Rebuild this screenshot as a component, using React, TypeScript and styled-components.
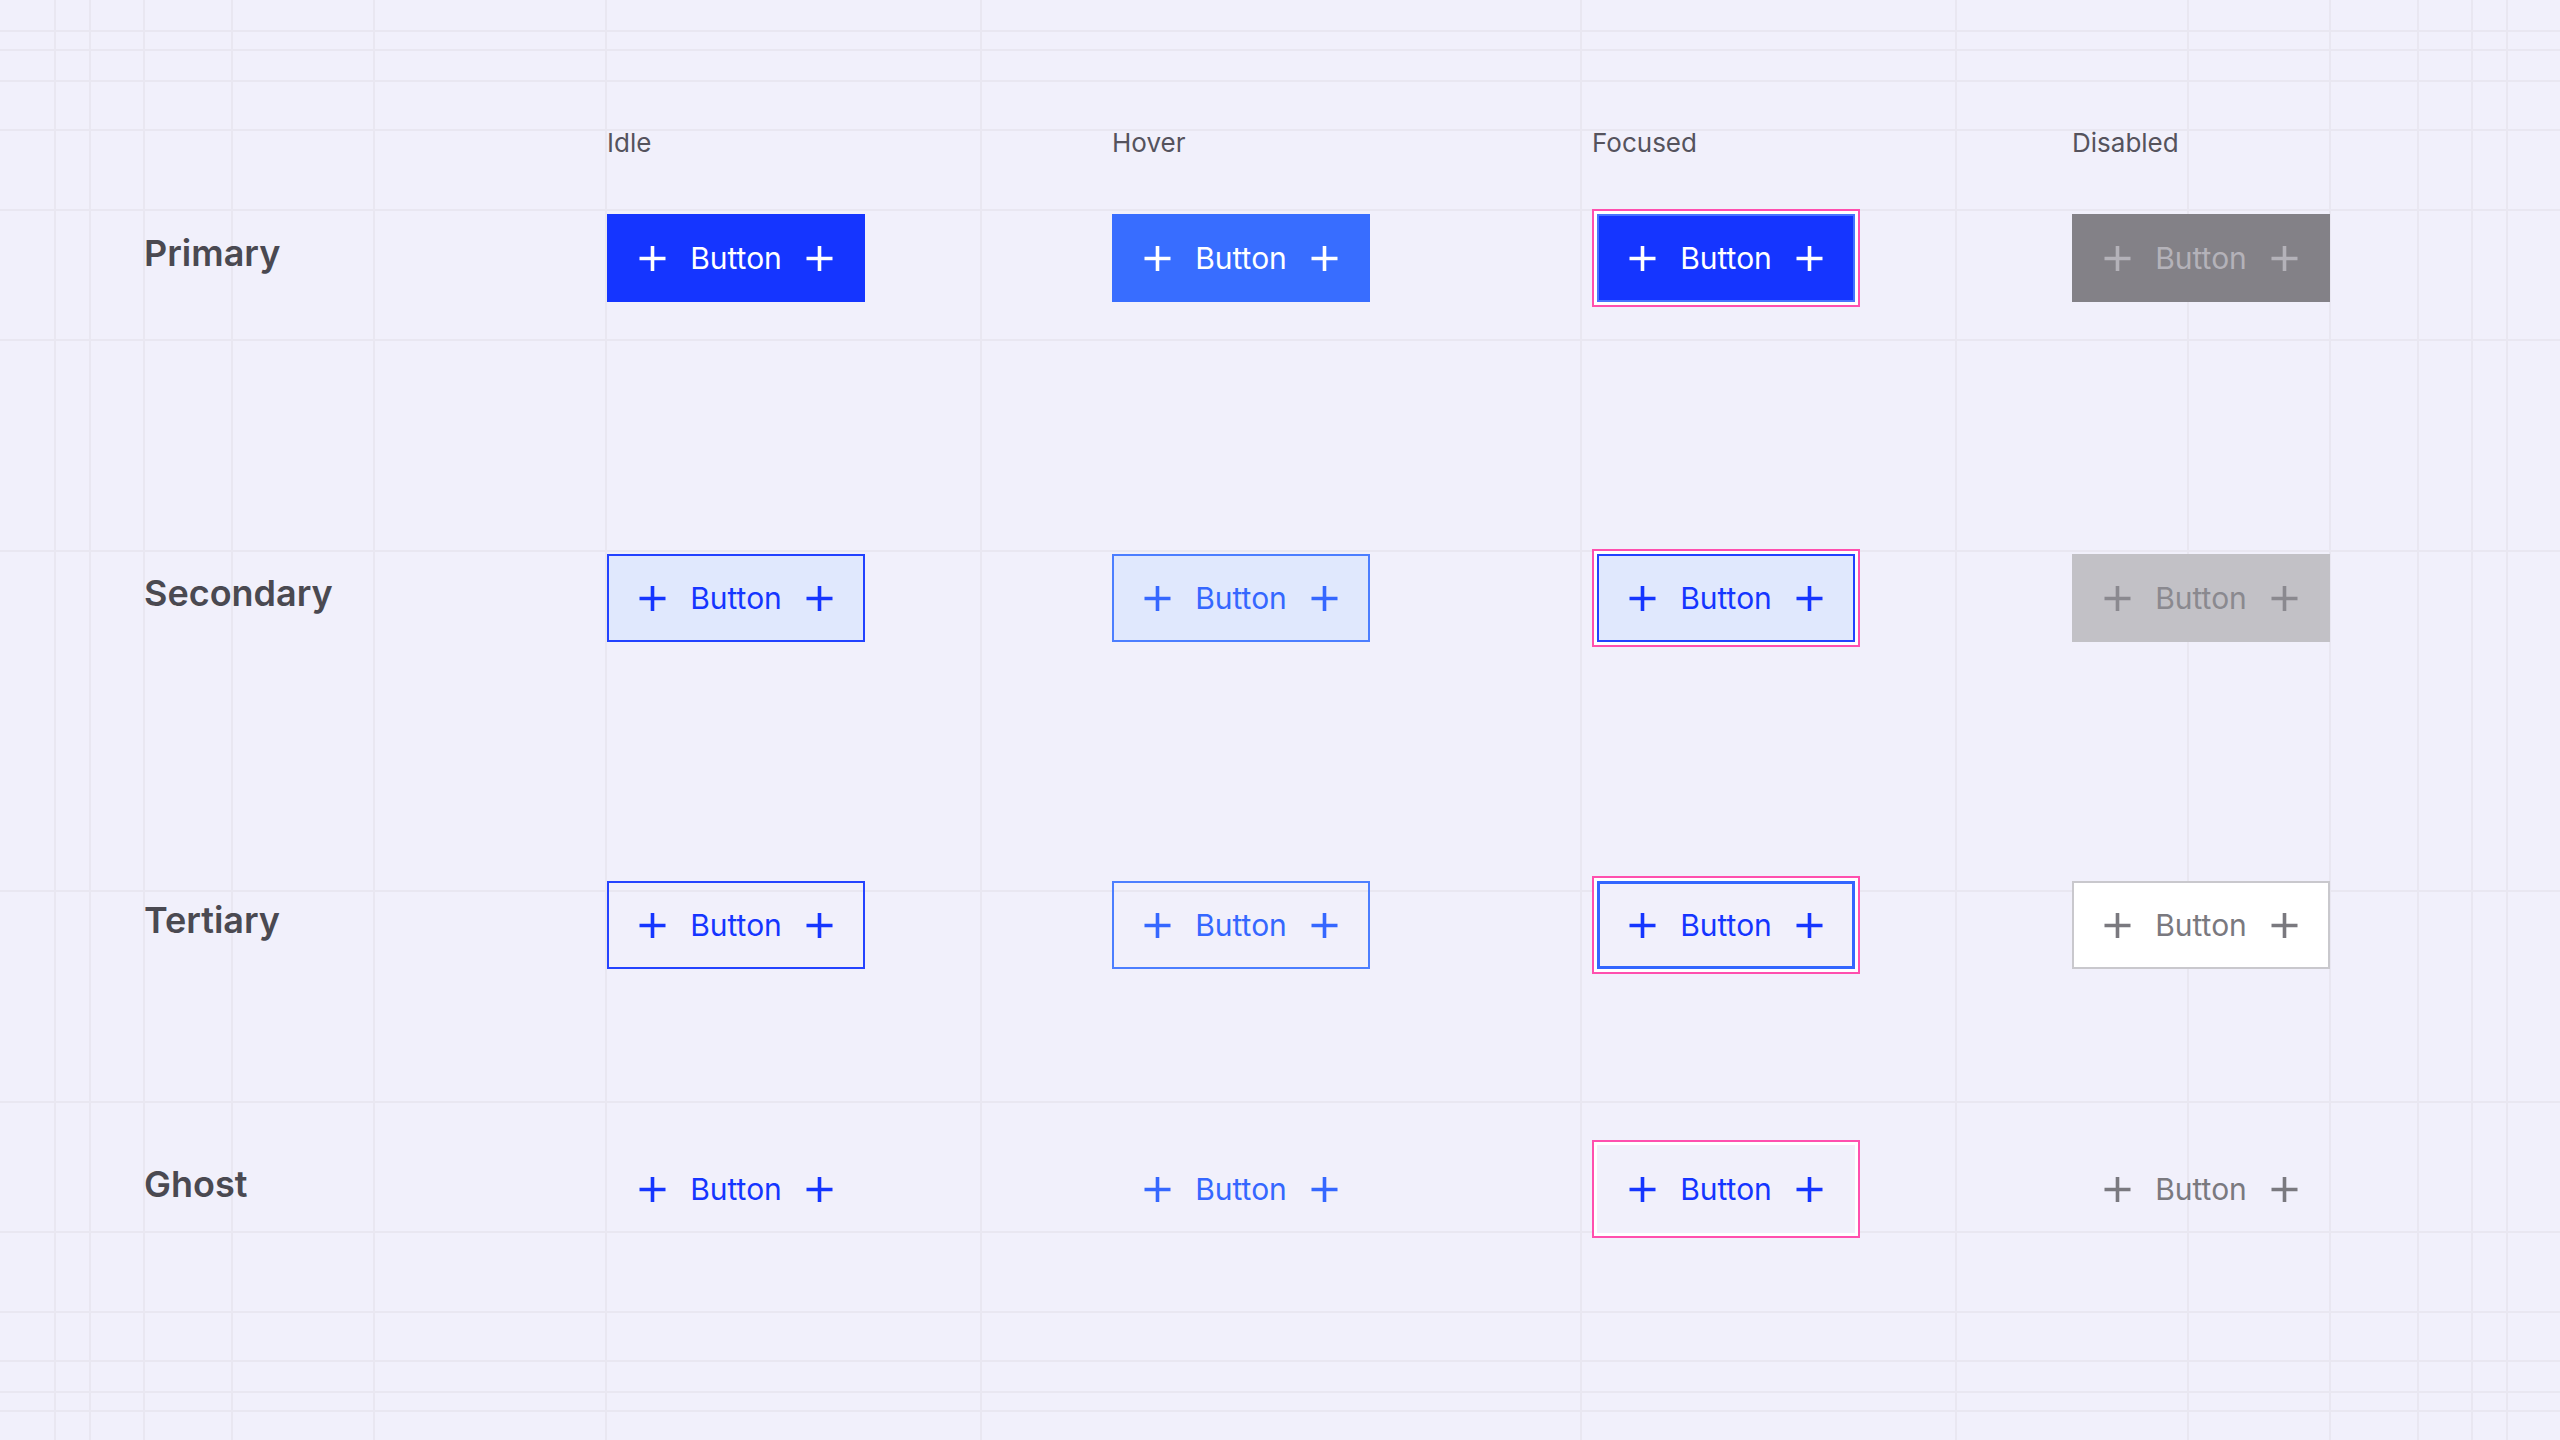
import React from 'react';
import styled, { createGlobalStyle } from 'styled-components';

// == constants ====================================================================================
const Colors = {
  page: '#f1f0fb',
  line: '#e9e7f1',
  ink: '#4a4951',
  inkSoft: '#55535d',
  blue: '#1535ff',
  blueHover: '#386dff',
  blueSoft: '#e0e8fd',
  focus: '#ff4fae',
};

const V_LINES = [ 54, 89, 143, 231, 373, 605, 980, 1580, 1955, 2187, 2329, 2417, 2471, 2506 ];
const H_LINES = [ 30, 49, 80, 129, 209, 339, 550, 890, 1101, 1231, 1311, 1360, 1391, 1410 ];

const gridLines = [
  ...V_LINES.map( ( x ) => `linear-gradient(${ Colors.line }, ${ Colors.line }) ${ x }px 0 / 2px 100% no-repeat` ),
  ...H_LINES.map( ( y ) => `linear-gradient(${ Colors.line }, ${ Colors.line }) 0 ${ y }px / 100% 2px no-repeat` ),
].join( ', ' );

type Kind = 'primary' | 'secondary' | 'tertiary' | 'ghost';
type State = 'idle' | 'hover' | 'focused' | 'disabled';

interface Look {
  bg: string;
  fg: string;
  border: string;
  inset?: string;
}

const LOOKS: Record<Kind, Record<State, Look>> = {
  primary: {
    idle: { bg: Colors.blue, fg: '#ffffff', border: 'none' },
    hover: { bg: Colors.blueHover, fg: '#ffffff', border: 'none' },
    focused: { bg: Colors.blue, fg: '#ffffff', border: 'none', inset: 'inset 0 0 0 2px #4673ff' },
    disabled: { bg: '#838187', fg: '#b4b2b9', border: 'none' },
  },
  secondary: {
    idle: { bg: Colors.blueSoft, fg: Colors.blue, border: `2px solid #2242ff` },
    hover: { bg: Colors.blueSoft, fg: '#3567ff', border: `2px solid #4c7eff` },
    focused: { bg: Colors.blueSoft, fg: Colors.blue, border: `2px solid #2242ff` },
    disabled: { bg: '#c2c1c6', fg: '#8a898f', border: 'none' },
  },
  tertiary: {
    idle: { bg: 'transparent', fg: Colors.blue, border: `2px solid #2543ff` },
    hover: { bg: 'transparent', fg: '#3567ff', border: `2px solid #4c7eff` },
    focused: { bg: Colors.page, fg: Colors.blue, border: `3px solid #3366ff` },
    disabled: { bg: '#ffffff', fg: '#7a797f', border: `2px solid #c9c8cd` },
  },
  ghost: {
    idle: { bg: 'transparent', fg: Colors.blue, border: 'none' },
    hover: { bg: 'transparent', fg: '#3567ff', border: 'none' },
    focused: { bg: Colors.page, fg: Colors.blue, border: 'none' },
    disabled: { bg: 'transparent', fg: '#7a797f', border: 'none' },
  },
};

const STATES: { key: State; label: string }[] = [
  { key: 'idle', label: 'Idle' },
  { key: 'hover', label: 'Hover' },
  { key: 'focused', label: 'Focused' },
  { key: 'disabled', label: 'Disabled' },
];

const ROWS: { kind: Kind; label: string; top: number }[] = [
  { kind: 'primary', label: 'Primary', top: 50 },
  { kind: 'secondary', label: 'Secondary', top: 242 },
  { kind: 'tertiary', label: 'Tertiary', top: 229 },
  { kind: 'ghost', label: 'Ghost', top: 166 },
];

// == styles =======================================================================================
const GlobalStyle = createGlobalStyle`
  html, body {
    margin: 0;
    padding: 0;
    background: ${ Colors.page };
  }

  body {
    font-family: Inter, "Noto Sans", sans-serif;
  }
`;

const Page = styled.div`
  box-sizing: border-box;
  width: 2560px;
  min-height: 1440px;
  padding: 127px 0 0 144px;
  background: ${ gridLines }, ${ Colors.page };
`;

const Row = styled.div<{ $height: number; $top: number }>`
  display: grid;
  grid-template-columns: 463px 505px 480px 480px 258px;
  align-items: center;
  height: ${ ( { $height } ) => $height }px;
  margin-top: ${ ( { $top } ) => $top }px;
`;

const StateLabel = styled.div`
  font-size: 26px;
  line-height: 32px;
  font-weight: 400;
  color: ${ Colors.inkSoft };
`;

const KindLabel = styled.div`
  font-size: 36px;
  line-height: 44px;
  font-weight: 600;
  color: ${ Colors.ink };
  padding-bottom: 10px;
`;

const Cell = styled.div`
  display: flex;
  align-items: center;
  justify-content: flex-start;
`;

const FocusRing = styled.div`
  display: inline-flex;
  border: 2px solid ${ Colors.focus };
  padding: 3px;
  background: #ffffff;
`;

const Button = styled.button<{ $look: Look }>`
  box-sizing: border-box;
  width: 258px;
  height: 88px;
  margin: 0;
  padding: 0;
  display: inline-flex;
  align-items: center;
  justify-content: center;
  gap: 24px;
  border-radius: 0;
  border: ${ ( { $look } ) => $look.border };
  background: ${ ( { $look } ) => $look.bg };
  box-shadow: ${ ( { $look } ) => $look.inset ?? 'none' };
  color: ${ ( { $look } ) => $look.fg };
  font-family: Inter, "Noto Sans", sans-serif;
  font-size: 30px;
  font-weight: 400;
  line-height: 1;
  cursor: pointer;

  &:disabled {
    cursor: default;
  }
`;

const PlusIcon = styled.svg`
  width: 27px;
  height: 27px;
  flex: none;
`;

// == components ===================================================================================
function Plus(): JSX.Element {
  return (
    <PlusIcon viewBox="0 0 27 27" aria-hidden>
      <path d="M13.5 1V26M0.5 13.5H26.5" stroke="currentColor" strokeWidth={ 3.6 } fill="none" />
    </PlusIcon>
  );
}

function DemoButton( { kind, state }: { kind: Kind; state: State } ): JSX.Element {
  const button = (
    <Button $look={ LOOKS[ kind ][ state ] } disabled={ state === 'disabled' }>
      <Plus />
      <span>Button</span>
      <Plus />
    </Button>
  );

  if ( state === 'focused' ) {
    return <FocusRing>{ button }</FocusRing>;
  }
  return button;
}

export default function App(): JSX.Element {
  return (
    <>
      <GlobalStyle />
      <Page>
        <Row $height={ 32 } $top={ 0 }>
          <div />
          { STATES.map( ( s ) => <StateLabel key={ s.key }>{ s.label }</StateLabel> ) }
        </Row>
        { ROWS.map( ( row ) => (
          <Row key={ row.kind } $height={ 98 } $top={ row.top }>
            <KindLabel>{ row.label }</KindLabel>
            { STATES.map( ( s ) => (
              <Cell key={ s.key }>
                <DemoButton kind={ row.kind } state={ s.key } />
              </Cell>
            ) ) }
          </Row>
        ) ) }
      </Page>
    </>
  );
}
